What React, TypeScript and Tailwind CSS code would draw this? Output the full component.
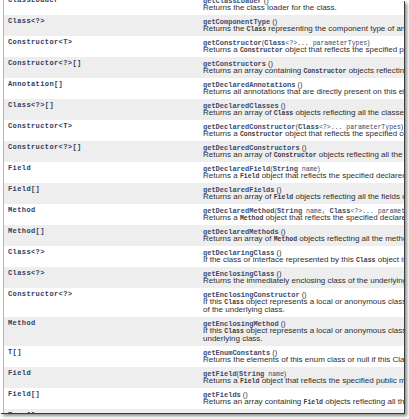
import React from "react";

const C = ({ children }: { children: React.ReactNode }) => (
  <span className="font-['Liberation_Mono',monospace] text-[6.5px] font-bold text-[#3a3a3a]">{children}</span>
);

type Row = {
  type: string;
  name: string;
  params?: React.ReactNode;
  desc: React.ReactNode[];
};

const P = ({ t, n }: { t: string; n: string }) => (
  <span>
    <span className="font-['Liberation_Sans',Arial,sans-serif] font-normal text-[7.5px]">(</span>
    <span className="font-bold">{t}</span>
    <span className="font-normal text-[6.5px]">{n}</span>
    <span className="font-['Liberation_Sans',Arial,sans-serif] font-normal text-[7.5px]">)</span>
  </span>
);

const Empty = () => (
  <span className="ml-[2px] font-['Liberation_Sans',Arial,sans-serif] font-normal text-[7.5px] text-[#333]">()</span>
);

const rows: Row[] = [
  { type: "ClassLoader", name: "getClassLoader", desc: ["Returns the class loader for the class."] },
  { type: "Class<?>", name: "getComponentType", desc: [<>Returns the <C>Class</C> representing the component type of an array.</>] },
  { type: "Constructor<T>", name: "getConstructor", params: <P t="Class" n="<?>...  parameterTypes" />, desc: [<>Returns a <C>Constructor</C> object that reflects the specified public constructor of the class</>] },
  { type: "Constructor<?>[]", name: "getConstructors", desc: [<>Returns an array containing <C>Constructor</C> objects reflecting all the public constructors</>] },
  { type: "Annotation[]", name: "getDeclaredAnnotations", desc: ["Returns all annotations that are directly present on this element."] },
  { type: "Class<?>[]", name: "getDeclaredClasses", desc: [<>Returns an array of <C>Class</C> objects reflecting all the classes and interfaces</>] },
  { type: "Constructor<T>", name: "getDeclaredConstructor", params: <P t="Class" n="<?>...  parameterTypes" />, desc: [<>Returns a <C>Constructor</C> object that reflects the specified constructor of the class</>] },
  { type: "Constructor<?>[]", name: "getDeclaredConstructors", desc: [<>Returns an array of <C>Constructor</C> objects reflecting all the constructors declared</>] },
  { type: "Field", name: "getDeclaredField", params: <P t="String" n=" name" />, desc: [<>Returns a <C>Field</C> object that reflects the specified declared field of the class</>] },
  { type: "Field[]", name: "getDeclaredFields", desc: [<>Returns an array of <C>Field</C> objects reflecting all the fields declared by the class</>] },
  {
    type: "Method",
    name: "getDeclaredMethod",
    params: (
      <span>
        <span className="font-['Liberation_Sans',Arial,sans-serif] font-normal text-[7.5px]">(</span>
        <span className="font-bold">String</span>
        <span className="font-normal text-[6.5px]"> name, </span>
        <span className="font-bold">Class</span>
        <span className="font-normal text-[6.5px]">&lt;?&gt;...  parameterTypes)</span>
      </span>
    ),
    desc: [<>Returns a <C>Method</C> object that reflects the specified declared method of the class</>],
  },
  { type: "Method[]", name: "getDeclaredMethods", desc: [<>Returns an array of <C>Method</C> objects reflecting all the methods declared by the class</>] },
  { type: "Class<?>", name: "getDeclaringClass", desc: [<>If the class or interface represented by this <C>Class</C> object is a member of another class</>] },
  { type: "Class<?>", name: "getEnclosingClass", desc: ["Returns the immediately enclosing class of the underlying class."] },
  { type: "Constructor<?>", name: "getEnclosingConstructor", desc: [<>If this <C>Class</C> object represents a local or anonymous class within a constructor</>, "of the underlying class."] },
  { type: "Method", name: "getEnclosingMethod", desc: [<>If this <C>Class</C> object represents a local or anonymous class within a method</>, "underlying class."] },
  { type: "T[]", name: "getEnumConstants", desc: ["Returns the elements of this enum class or null if this Class object does not represent an enum type."] },
  { type: "Field", name: "getField", params: <P t="String" n=" name" />, desc: [<>Returns a <C>Field</C> object that reflects the specified public member field of the class</>] },
  { type: "Field[]", name: "getFields", desc: [<>Returns an array containing <C>Field</C> objects reflecting all the accessible public fields</>] },
  { type: "Type[]", name: "getGenericInterfaces", desc: [<>Returns the <C>Type</C>s representing the interfaces directly implemented</>] },
];

export default function App() {
  return (
    <div className="w-[409px] h-[419px] bg-white">
      <div className="w-[404px] h-[413px] overflow-hidden bg-white shadow-[1px_1px_0_#3c3c3c,3px_3px_3px_rgba(0,0,0,0.45)]">
        <div className="ml-[3px] -mt-[6px] border-l border-[#b0b8c6]">
          {rows.map((r, i) => (
            <div key={i} className={`flex py-[3px] ${i % 2 === 1 ? "bg-[#eeeeef]" : "bg-white"}`}>
              <div className="w-[199px] shrink-0 pl-[4px] font-['Liberation_Mono',monospace] font-bold text-[7px] leading-[7px] tracking-[0.4px] text-[#2e3d5e] whitespace-nowrap">
                {r.type}
              </div>
              <div className="flex-1 min-w-0 whitespace-nowrap">
                <div className="h-[7px] leading-[7px] font-['Liberation_Mono',monospace] text-[7px] text-[#3b4b6d]">
                  <span className="font-bold">{r.name}</span>
                  {r.params ? r.params : <Empty />}
                </div>
                {r.desc.map((d, j) => (
                  <div key={j} className="leading-[8px] h-[8px] text-[8px] font-['Liberation_Sans',Arial,sans-serif] text-[#2f2f2f]">
                    {d}
                  </div>
                ))}
              </div>
            </div>
          ))}
        </div>
      </div>
    </div>
  );
}
